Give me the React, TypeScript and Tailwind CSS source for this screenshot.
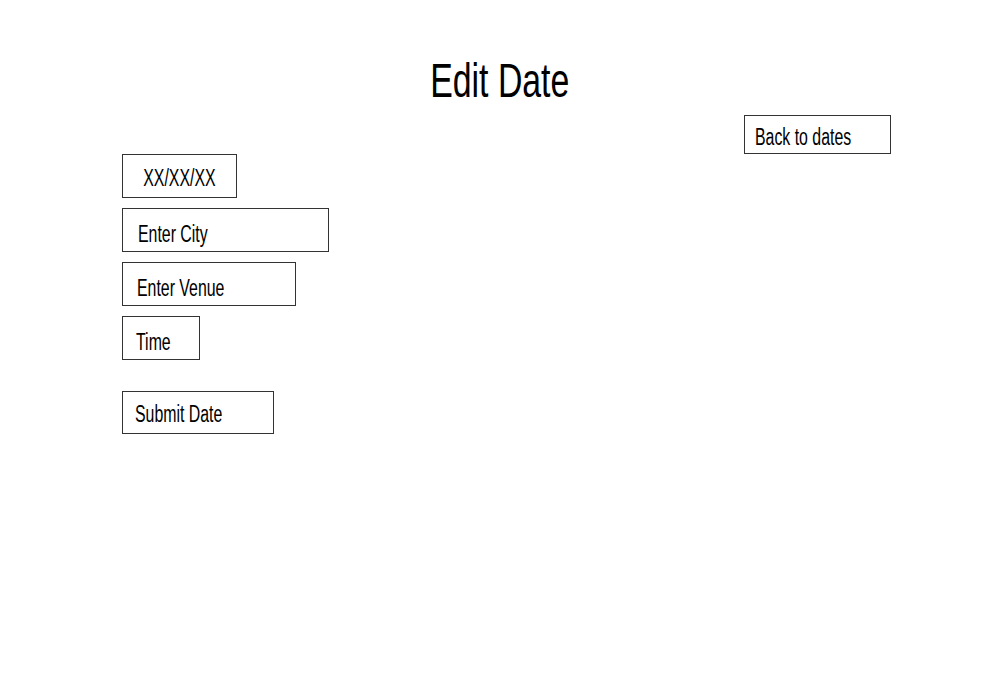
import React from "react";

type Field = {
  label: string;
  width: string;
  pad: string;
  center?: boolean;
};

const fields: Field[] = [
  { label: "XX/XX/XX", width: "w-[115px]", pad: "pt-[5px]", center: true },
  { label: "Enter City", width: "w-[207px]", pad: "pt-[9px] pl-[15px]" },
  { label: "Enter Venue", width: "w-[174px]", pad: "pt-[8px] pl-[14px]" },
  { label: "Time", width: "w-[78px]", pad: "pt-[8px] pl-[13px]" },
];

// condensed text like the wireframe's narrow face
const Narrow = ({ children, origin }: { children: React.ReactNode; origin: string }) => (
  <span className={`inline-block whitespace-nowrap scale-x-[0.69] ${origin}`}>{children}</span>
);

export default function App() {
  return (
    <div className="w-[1000px] h-[700px] bg-white text-black font-['Liberation_Sans',Arial,sans-serif]">
      <div className="pt-[56px] h-[105px] text-center text-[49px] leading-none">
        <Narrow origin="origin-center">Edit Date</Narrow>
      </div>

      <div className="mt-[10px] flex justify-end pr-[109px]">
        <button className="w-[147px] h-[39px] border border-[#333] flex items-center pl-[10px] pt-[5px] text-[23px] leading-none">
          <Narrow origin="origin-left">Back to dates</Narrow>
        </button>
      </div>

      <div className="ml-[122px] flex flex-col items-start gap-[10px]">
        {fields.map((f) => (
          <div
            key={f.label}
            className={`${f.width} h-[44px] border border-[#333] flex items-center text-[23px] leading-none ${f.pad} ${
              f.center ? "justify-center" : ""
            }`}
          >
            <Narrow origin={f.center ? "origin-center" : "origin-left"}>{f.label}</Narrow>
          </div>
        ))}
        <button className="mt-[21px] w-[152px] h-[43px] border border-[#333] flex items-center pl-[12px] pt-[4px] text-[23px] leading-none">
          <Narrow origin="origin-left">Submit Date</Narrow>
        </button>
      </div>
    </div>
  );
}
